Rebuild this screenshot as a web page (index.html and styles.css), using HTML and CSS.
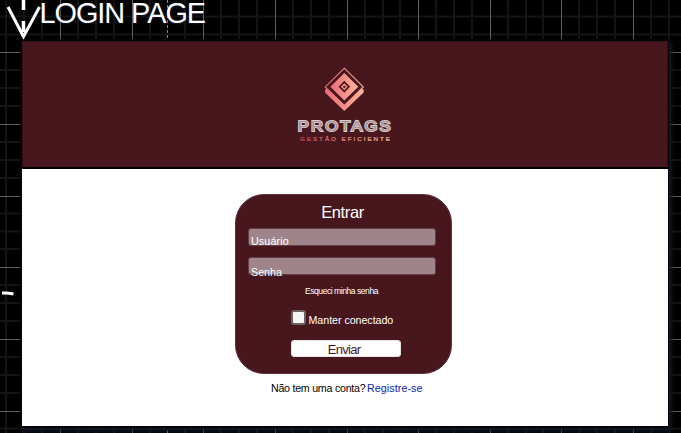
FILE: index.html
```html
<!DOCTYPE html>
<html lang="pt-BR">
<head>
<meta charset="utf-8">
<title>Login Page</title>
<link rel="stylesheet" href="styles.css">
</head>
<body>
<main class="board">
  <svg class="grid" width="681" height="433" aria-hidden="true">
    <path class="minor" d="M6 0V433M24 0V433M42 0V433M78 0V433M96 0V433M114 0V433M150 0V433M185 0V433M221 0V433M239 0V433M257 0V433M293 0V433M311 0V433M329 0V433M365 0V433M383 0V433M400 0V433M436 0V433M454 0V433M472 0V433M508 0V433M526 0V433M543 0V433M579 0V433M597 0V433M615 0V433M651 0V433M669 0V433M0 16.500H681M0 34.500H681M0 70H681M0 88H681M0 106H681M0 142H681M0 160H681M0 178H681M0 213.500H681M0 231.500H681M0 249H681M0 285H681M0 303H681M0 321H681M0 357H681M0 375H681M0 393H681M0 428.500H681"/>
    <path class="major" d="M60.500 0V433M132.500 0V433M203.500 0V433M275.500 0V433M347.500 0V433M418.500 0V433M490.500 0V433M561.500 0V433M633.500 0V433M0 52.500H681M0 124.500H681M0 196.500H681M0 267.500H681M0 339.500H681M0 411.500H681"/>
    <path class="axis" d="M167.500 0V433"/>
  </svg>
  <svg class="arrow" width="48" height="42" aria-hidden="true">
    <path class="stem" d="M23.500 0V10M23.500 21V32"/>
    <path class="head" d="M8 7L23.500 36.500L39.500 7"/>
  </svg>
  <svg class="dash" width="14" height="6" aria-hidden="true"><path d="M0 2Q6 1.600 11.500 3"/></svg>
  <h1 class="label">LOGIN PAGE</h1>
  <section class="page">
    <header class="banner">
      <svg class="logo" width="110" height="82" viewBox="0 0 110 82">
        <defs>
          <linearGradient id="rose" x1="0" x2="1"><stop offset="0" stop-color="#ea6b78"/><stop offset="1" stop-color="#ffb59a"/></linearGradient>
          <linearGradient id="tag" x1="0" x2="1"><stop offset="0" stop-color="#c8405c"/><stop offset=".5" stop-color="#e8887c"/><stop offset="1" stop-color="#f5c098"/></linearGradient>
        </defs>
        <path d="M54.300 3.200L73.300 21.900L54.300 40.500L35.300 21.900Z" fill="none" stroke="url(#rose)" stroke-width="1.100"/>
        <path d="M35 24.500L37 24L54.300 40.500L71.600 24L73.600 24.500V27.500L54.300 46L35 27.500Z" fill="url(#rose)"/>
        <path fill-rule="evenodd" d="M54.300 8L68.300 21.700L54.300 35.500L40.300 21.700ZM54.300 15.700L48.500 21.700L54.300 27.700L60.100 21.700Z" fill="url(#rose)"/>
        <path d="M54.300 19.200L56.800 21.700L54.300 24.200L51.800 21.700Z" fill="none" stroke="#e98983" stroke-width="1.500"/>
        <text class="brand" x="7.800" y="66" textLength="95" lengthAdjust="spacingAndGlyphs">PROTAGS</text>
        <text class="brand-cut" x="7.800" y="66" textLength="95" lengthAdjust="spacingAndGlyphs">PROTAGS</text>
        <text class="tagline" x="10" y="75.500" textLength="90">GESTÃO EFICIENTE</text>
      </svg>
    </header>
    <div class="content">
      <form class="card">
        <h2 class="title">Entrar</h2>
        <div class="field first"><span class="user">Usuário</span></div>
        <div class="field"><span>Senha</span></div>
        <a class="forgot">Esqueci minha senha</a>
        <label class="remember"><span class="box"></span><span>Manter conectado</span></label>
        <button class="submit" type="button">Enviar</button>
      </form>
      <p class="signup"><span class="question">Não tem uma conta?</span><a class="register">Registre-se</a></p>
    </div>
  </section>
</main>
</body>
</html>
```

FILE: styles.css
```css
* { box-sizing: border-box; }
body { margin: 0; background: #000; font-family: "Liberation Sans", Arial, sans-serif; }
.board { position: relative; width: 681px; height: 433px; padding: 39px 0 0 20px; overflow: hidden; }
.grid { position: absolute; inset: 0; }
.minor { stroke: #141414; stroke-width: 2; }
.major { stroke: #606060; }
.axis { stroke: #858585; stroke-dasharray: 3 2; }
.arrow { position: absolute; left: 0; top: 0; z-index: 2; fill: none; stroke: #fff; stroke-width: 3; }
.stem { stroke-width: 3.5; }
.dash { position: absolute; left: 2px; top: 291px; fill: none; stroke: #fff; stroke-width: 3; }
.label { position: absolute; left: 39.5px; top: 0; margin: 0; color: #fff; font-size: 28.8px; line-height: 27px; font-weight: 400; letter-spacing: -1px; white-space: nowrap; text-shadow: 1px 1px 2px #101a30; }
.page { position: relative; width: 649px; height: 389px; border: 2px solid #050505; border-right-width: 1px; background: #fff; box-shadow: 3px 3px 4px #101728; }
.banner { height: 128px; border: 1px solid #321015; border-bottom: 2px solid #000; background: #48171e; display: flex; justify-content: center; padding-top: 23px; }
.logo { margin-left: 0; }
.brand { font: 400 15.5px "Liberation Sans", Arial, sans-serif; fill: none; stroke: #d8ccce; stroke-width: 1.9; letter-spacing: 2px; }
.brand-cut { font: 400 15.5px "Liberation Sans", Arial, sans-serif; fill: #a58f94; letter-spacing: 2px; }
.tagline { font: 400 6.2px "Liberation Sans", Arial, sans-serif; fill: url(#tag); stroke: url(#tag); stroke-width: .2; }
.content { display: flex; flex-direction: column; align-items: center; padding-top: 25px; }
.card { width: 217px; height: 180px; margin-left: -3px; border: 1px solid #612f37; border-radius: 29px; background: #48171e; display: flex; flex-direction: column; align-items: center; padding-top: 7px; color: #fff; }
.title { margin: 0 0 6px -2px; font-size: 16.5px; line-height: 20px; font-weight: 400; letter-spacing: -.4px; }
.field { width: 188px; height: 18px; margin: 0 4px 11px 0; border: 1px solid #624047; border-radius: 3px; background: #9f858b; padding: 7px 0 0 2.5px; font-size: 10.7px; line-height: 14px; white-space: nowrap; }
.first { padding-top: 5px; }
.user { letter-spacing: .15px; }
.forgot { margin: -1px 4px 0 0; font-size: 8.6px; line-height: 12px; letter-spacing: -.48px; }
.remember { width: 104px; height: 18px; margin: 12px 0 0 -2px; display: flex; gap: 3px; font-size: 10.7px; line-height: 22px; white-space: nowrap; letter-spacing: -.05px; }
.box { flex: none; width: 15px; height: 15px; margin-top: 1px; border: 2px solid #6b6465; border-radius: 3px; background: #f5f5f5; }
.submit { width: 110px; height: 17px; margin: 13px 0 0 4px; padding: 1px 3px 0 0; border: 1px solid #eadfe2; border-radius: 3px; background: #fff; color: #48171e; font: 13px/15px "Liberation Sans", Arial, sans-serif; letter-spacing: -.7px; }
.signup { width: 156px; margin: 8px 0 0 8px; display: flex; gap: 2px; font-size: 10.7px; line-height: 13px; white-space: nowrap; }
.question { width: 94px; color: #000; letter-spacing: -.27px; }
.register { color: #0a1cb4; letter-spacing: .08px; }
```
